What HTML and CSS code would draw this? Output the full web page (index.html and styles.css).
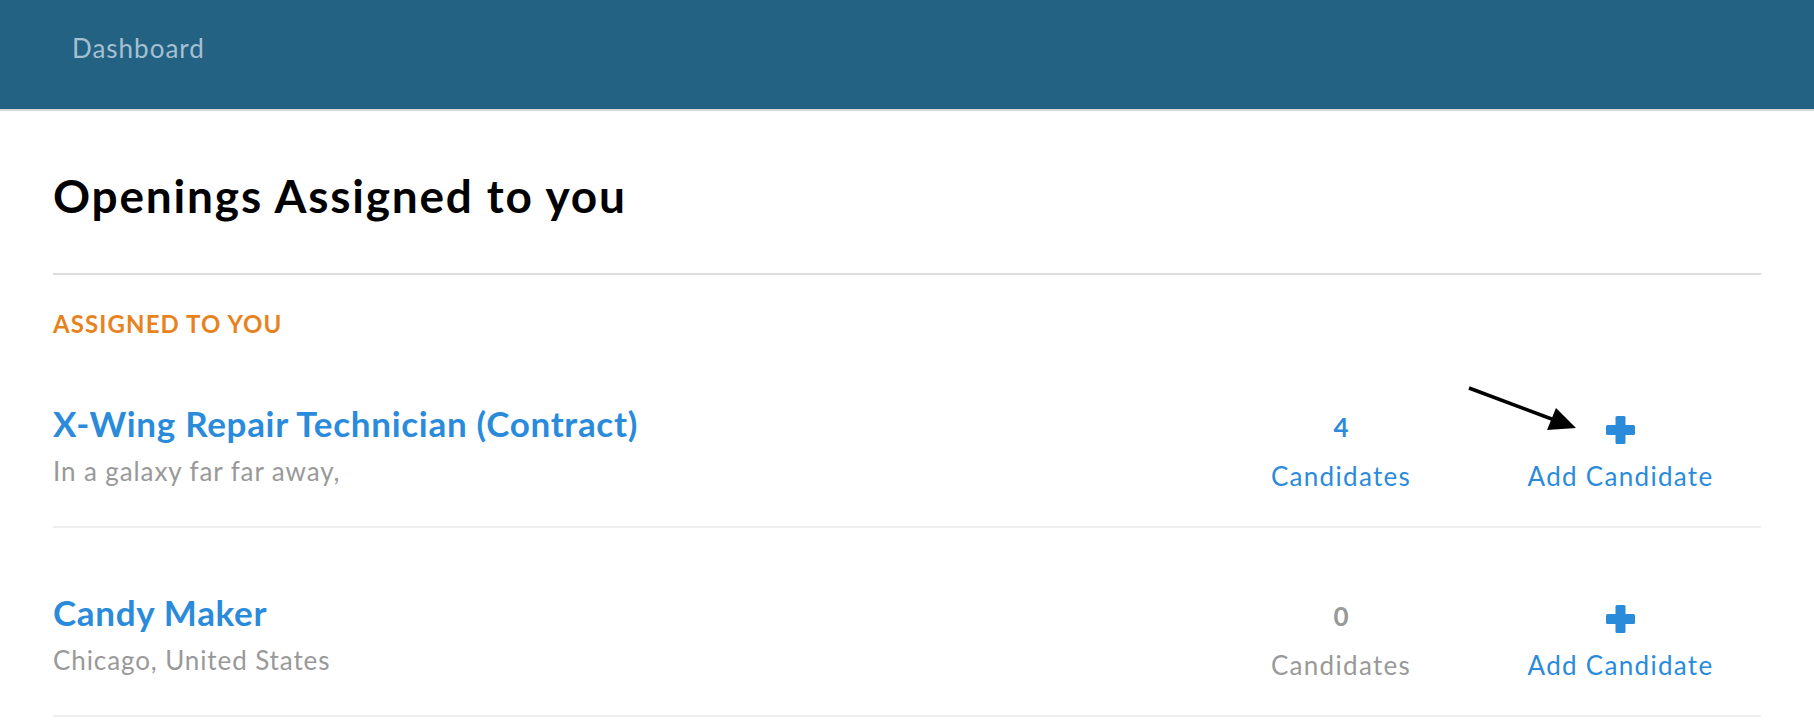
FILE: index.html
```html
<!DOCTYPE html>
<html lang="en">

<head>
    <meta charset="UTF-8" />
    <meta name="viewport" content="width=device-width, initial-scale=1.0" />
    <title>Dashboard</title>
    <link rel="stylesheet" href="styles.css">
</head>

<body>
    <div id="topbar">
        <span class="nav_link">Dashboard</span>
    </div>

    <div id="content">
        <div class="page_title">
            <h1>Openings Assigned to you</h1>
        </div>

        <div class="section_label">ASSIGNED TO YOU</div>

        <div class="opening">
            <div class="opening_info">
                <div class="opening_name">X-Wing Repair Technician (Contract)</div>
                <div class="opening_place">In a galaxy far far away,</div>
            </div>
            <div class="stat">
                <div class="stat_num">4</div>
                <div class="stat_label">Candidates</div>
            </div>
            <div class="add">
                <svg class="arrow" width="115" height="55" viewBox="0 0 115 55">
                    <line x1="4" y1="8" x2="92" y2="41" stroke="#000" stroke-width="3.5" />
                    <polygon points="111,48 82,50 91,28" fill="#000" />
                </svg>
                <svg class="plus" width="29" height="28" viewBox="0 0 29 28">
                    <rect x="9.5" y="0" width="10" height="28" rx="1.5" fill="#2b8bdb" />
                    <rect x="0" y="9" width="29" height="10" rx="1.5" fill="#2b8bdb" />
                </svg>
                <div class="add_label">Add Candidate</div>
            </div>
        </div>

        <div class="opening">
            <div class="opening_info">
                <div class="opening_name">Candy Maker</div>
                <div class="opening_place">Chicago, United States</div>
            </div>
            <div class="stat empty">
                <div class="stat_num">0</div>
                <div class="stat_label">Candidates</div>
            </div>
            <div class="add">
                <svg class="plus" width="29" height="28" viewBox="0 0 29 28">
                    <rect x="9.5" y="0" width="10" height="28" rx="1.5" fill="#2b8bdb" />
                    <rect x="0" y="9" width="29" height="10" rx="1.5" fill="#2b8bdb" />
                </svg>
                <div class="add_label">Add Candidate</div>
            </div>
        </div>
    </div>
</body>

</html>
```

FILE: styles.css
```css
body {
    font-family: Lato, "Open Sans", Arial, sans-serif;
    background-color: #ffffff;
    margin: 0;
    padding: 0;
}

#topbar {
    box-sizing: border-box;
    height: 111px;
    padding: 33px 72px 0;
    background-color: #236283;
    border-bottom: 2px solid #d9d9d9;
}

.nav_link {
    font-size: 26px;
    line-height: 1.2;
    letter-spacing: 1px;
    color: #a5c0d2;
}

#content {
    padding: 0 53px;
}

.page_title {
    padding: 57px 0 50px;
    border-bottom: 2px solid #dddddd;
}

.page_title h1 {
    margin: 0;
    font-size: 46px;
    line-height: 1.2;
    font-weight: 700;
    letter-spacing: 1.8px;
    color: #000000;
}

.section_label {
    padding-top: 35px;
    font-size: 24px;
    line-height: 1.2;
    font-weight: 700;
    letter-spacing: 1.1px;
    color: #e8821e;
}

.opening {
    display: flex;
    align-items: flex-start;
    padding: 63px 0 35px;
    border-bottom: 2px solid #eeeeee;
}

.opening_info {
    flex: 1;
}

.opening_name {
    font-size: 35px;
    line-height: 1.2;
    font-weight: 700;
    letter-spacing: 0.7px;
    color: #2b8bdb;
}

.opening_place {
    margin-top: 12px;
    font-size: 26px;
    line-height: 1.2;
    letter-spacing: 0.9px;
    color: #999999;
}

.stat {
    width: 278px;
    padding-top: 10px;
    display: flex;
    flex-direction: column;
    align-items: center;
    color: #2b8bdb;
}

.stat.empty {
    color: #999999;
}

.stat_num {
    font-size: 26px;
    line-height: 30px;
    font-weight: 700;
}

.stat_label {
    margin-top: 19px;
    font-size: 26px;
    line-height: 30px;
    letter-spacing: 1.3px;
}

.add {
    position: relative;
    width: 281px;
    padding-top: 14px;
    display: flex;
    flex-direction: column;
    align-items: center;
}

.arrow {
    position: absolute;
    left: -15px;
    top: -22px;
}

.add_label {
    margin-top: 17px;
    font-size: 26px;
    line-height: 30px;
    letter-spacing: 1.3px;
    color: #2b8bdb;
}
```
